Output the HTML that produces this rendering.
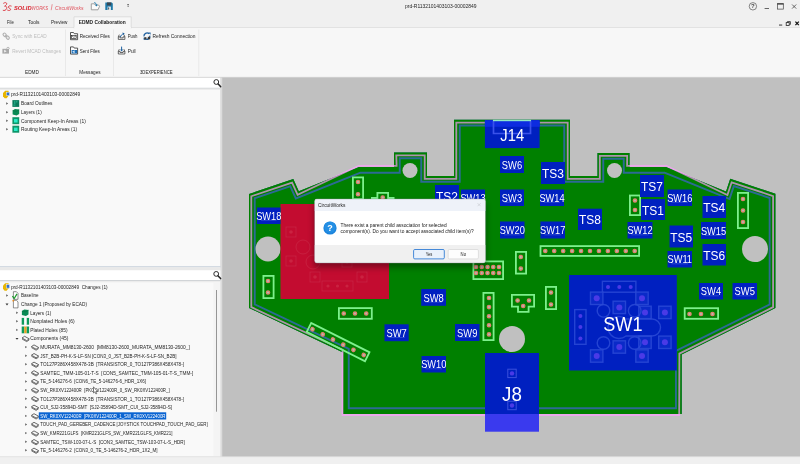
<!DOCTYPE html><html><head><meta charset="utf-8"><title>CircuitWorks</title>
<style>html,body{margin:0;padding:0;background:#f0f0f0;overflow:hidden}svg{display:block;will-change:transform}text{font-family:"Liberation Sans", Arial, sans-serif;}</style></head><body>
<svg width="800" height="464" viewBox="0 0 800 464">
<rect x="0" y="0" width="800" height="464" fill="#f0f0f0" />
<rect x="0" y="27.8" width="800" height="49.8" fill="#f7f7f7" />
<rect x="0" y="27.2" width="800" height="0.7" fill="#dcdcdc" />
<rect x="222.1" y="77.4" width="577.9" height="379.2" fill="#c0c0c0" />
<rect x="0" y="77.6" width="220.4" height="378.9" fill="#f9f9f9" />
<g fill="none" stroke="#d9232e" stroke-width="0.85" stroke-linecap="round" stroke-linejoin="round">
<path d="M3.6,3.2 C5.4,2 7.2,2.6 6.6,4.4 C6.2,5.4 5,5.8 4.6,6.2 C6.2,6 7.2,7 6.6,8.6 C6,10.4 4.2,10.8 3.2,10.4"/>
<path d="M11.2,6 C9.8,5.4 8.2,6 8.4,7.2 C8.6,8.4 10.6,8.2 10.6,9.4 C10.6,10.6 8.6,10.8 7.6,10.2"/>
</g>
<text x="14" y="9.7" font-size="5.6" fill="#d9232e" textLength="17.6" lengthAdjust="spacingAndGlyphs" font-weight="bold" font-style="italic" xml:space="preserve" >SOLID</text>
<text x="31.6" y="9.7" font-size="5.6" fill="#e0525c" textLength="16.6" lengthAdjust="spacingAndGlyphs" font-style="italic" xml:space="preserve" >WORKS</text>
<path d="M52.2,4.2 L51.2,10.2" stroke="#e0525c" stroke-width="0.6"/>
<text x="55" y="9.7" font-size="5.6" fill="#e0525c" textLength="28.6" lengthAdjust="spacingAndGlyphs" font-style="italic" xml:space="preserve" >CircuitWorks</text>
<path d="M91.3,3.8 H94.4 L95.2,5 H98.6 L99.6,6.2 L98,9.8 H91.3 Z" fill="#fbfbfb" stroke="#8a8a8a" stroke-width="0.8" stroke-linejoin="round"/>
<path d="M94.3,2.6 C95.6,2.8 96.4,3.8 96.5,5.6" fill="none" stroke="#1a7ab0" stroke-width="1"/><path d="M95.2,4.9 L96.6,6.6 L97.6,4.6 Z" fill="#1a7ab0"/>
<path d="M105.3,2.4 H111.8 L112.8,3.4 V10 H105.3 Z" fill="#1f79a8"/>
<rect x="107" y="2.4" width="4.2" height="3.0" fill="#3a4650" />
<rect x="107.6" y="6.6" width="3.2" height="3.4" fill="#f4f6f8" />
<rect x="108.2" y="7.4" width="1.0" height="2.2" fill="#3a4650" />
<path d="M127.1,5.7 h2 l-1,1.3 z" fill="#444"/><rect x="127.2" y="4.1" width="1.8" height="0.7" fill="#444"/>
<text x="405" y="8.2" font-size="5.5" fill="#1e1e1e" textLength="71.5" lengthAdjust="spacingAndGlyphs" xml:space="preserve" >prd-R1132101403103-00002849</text>
<circle cx="752.9" cy="6.3" r="3.7" fill="none" stroke="#555" stroke-width="0.7"/>
<text x="752.9" y="8.4" font-size="6" fill="#444" text-anchor="middle" font-weight="bold" xml:space="preserve" >?</text>
<rect x="764.6" y="8" width="4.4" height="0.8" fill="#444" />
<rect x="777.5" y="3.7" width="5.8" height="5.4" fill="none" stroke="#444" stroke-width="0.7"/>
<rect x="777.2" y="3.3" width="6.4" height="1.3" fill="#444" />
<path d="M792.1,4.5 L796.2,8.6 M796.2,4.5 L792.1,8.6" stroke="#444" stroke-width="0.8"/>
<rect x="779" y="24.6" width="3.2" height="0.9" fill="#222" />
<rect x="786.2" y="22.6" width="3" height="2.8" fill="none" stroke="#222" stroke-width="0.8"/><path d="M787.4,22.4 V21.6 H790.4 V24.4 H789.6" fill="none" stroke="#222" stroke-width="0.8"/>
<path d="M795.4,21.6 L798.8,25.2 M798.8,21.6 L795.4,25.2" stroke="#111" stroke-width="1.2"/>
<text x="7" y="24" font-size="5.7" fill="#1e1e1e" textLength="6.8" lengthAdjust="spacingAndGlyphs" xml:space="preserve" >File</text>
<text x="28" y="24" font-size="5.7" fill="#1e1e1e" textLength="11.4" lengthAdjust="spacingAndGlyphs" xml:space="preserve" >Tools</text>
<text x="51" y="24" font-size="5.7" fill="#1e1e1e" textLength="16.4" lengthAdjust="spacingAndGlyphs" xml:space="preserve" >Preview</text>
<path d="M74,28.2 V16.8 H131.2 V28.2" fill="#f7f7f7" stroke="#d4d4d4" stroke-width="0.7"/>
<rect x="74.4" y="27" width="56.5" height="1.4" fill="#f7f7f7" />
<text x="78.8" y="24" font-size="5.7" fill="#1a1a1a" textLength="47" lengthAdjust="spacingAndGlyphs" font-weight="bold" xml:space="preserve" >EDMD Collaboration</text>
<rect x="65.3" y="29.5" width="0.7" height="46.5" fill="#e3e3e3" />
<rect x="113.10000000000001" y="29.5" width="0.7" height="46.5" fill="#e3e3e3" />
<rect x="198.5" y="29.5" width="0.7" height="46.5" fill="#e3e3e3" />
<rect x="0" y="76.9" width="800" height="0.9" fill="#cdcdcd" />
<g fill="none" stroke="#b2b2b2" stroke-width="1.1" stroke-linecap="round"><rect x="3.4" y="33" width="2.6" height="3.6" rx="1.2" transform="rotate(-40 4.7 34.8)"/><rect x="6.4" y="35.8" width="2.6" height="3.6" rx="1.2" transform="rotate(-40 7.7 37.6)"/><path d="M5.4,35.6 L7,37"/></g>
<text x="12.2" y="38.3" font-size="5.6" fill="#bdbdbd" textLength="34.6" lengthAdjust="spacingAndGlyphs" xml:space="preserve" >Sync with ECAD</text>
<rect x="2.4" y="48.8" width="6.6" height="4.8" fill="#a9a9a9"/><path d="M4.2,49.8 V52.6 L6.6,51.2 Z" fill="#f4f4f4"/><path d="M6.6,48.6 C6.8,46.8 9.4,46.8 9.4,48.8" fill="none" stroke="#b0b0b0" stroke-width="0.9"/>
<text x="12.2" y="53.1" font-size="5.6" fill="#bdbdbd" textLength="48.8" lengthAdjust="spacingAndGlyphs" xml:space="preserve" >Revert MCAD Changes</text>
<text x="25" y="74.2" font-size="5.5" fill="#1e1e1e" textLength="13.9" lengthAdjust="spacingAndGlyphs" xml:space="preserve" >EDMD</text>
<path d="M70.5,32.5 H73.5 L74.3,33.7 H77.6 V39.7 H70.5 Z" fill="#fcfcfc" stroke="#2e2e2e" stroke-width="0.8" stroke-linejoin="round"/>
<rect x="71.6" y="35.6" width="4.6" height="3" fill="#fff" stroke="#2e2e2e" stroke-width="0.7"/><path d="M71.6,35.6 L73.9,37.4 L76.2,35.6" fill="none" stroke="#2e2e2e" stroke-width="0.6"/>
<text x="79.7" y="38.3" font-size="5.6" fill="#1e1e1e" textLength="30.2" lengthAdjust="spacingAndGlyphs" xml:space="preserve" >Received Files</text>
<path d="M70.5,46.9 H73.5 L74.3,48.1 H77.6 V54.1 H70.5 Z" fill="#fcfcfc" stroke="#2e2e2e" stroke-width="0.8" stroke-linejoin="round"/>
<rect x="71.6" y="50" width="5.6" height="3.4" fill="#1d6fb8"/><path d="M72.2,51.7 L74.6,50.2 V53.2 Z" fill="#cfe4f7"/>
<text x="79.7" y="53.1" font-size="5.6" fill="#1e1e1e" textLength="20" lengthAdjust="spacingAndGlyphs" xml:space="preserve" >Sent Files</text>
<text x="79.3" y="74.2" font-size="5.5" fill="#1e1e1e" textLength="21.3" lengthAdjust="spacingAndGlyphs" xml:space="preserve" >Messages</text>
<path d="M119.3,34.6 L118.3,36.8 V39.4 H124.9 V36.8 L123.9,34.6 M118.3,36.8 H120.1 V37.9 H123.1 V36.8 H124.9" fill="none" stroke="#2e2e2e" stroke-width="0.7" stroke-linejoin="round"/>
<path d="M120.4,37 C120.8,35.4 121.8,34.4 123.4,33.8" fill="none" stroke="#1d5f9e" stroke-width="1"/><path d="M122.4,32.6 L124.6,33.2 L123.4,35.2 Z" fill="#1d5f9e"/>
<text x="127.7" y="38.3" font-size="5.6" fill="#1e1e1e" textLength="9.8" lengthAdjust="spacingAndGlyphs" xml:space="preserve" >Push</text>
<path d="M119.3,49.2 L118.3,51.4 V54.0 H124.9 V51.4 L123.9,49.2 M118.3,51.4 H120.1 V52.5 H123.1 V51.4 H124.9" fill="none" stroke="#2e2e2e" stroke-width="0.7" stroke-linejoin="round"/>
<path d="M121.6,46.6 V50.4" fill="none" stroke="#1d5f9e" stroke-width="1"/><path d="M120.1,49.6 H123.1 L121.6,51.6 Z" fill="#1d5f9e"/>
<text x="127.7" y="53.1" font-size="5.6" fill="#1e1e1e" textLength="8" lengthAdjust="spacingAndGlyphs" xml:space="preserve" >Pull</text>
<g fill="none" stroke="#1d5f9e" stroke-width="1.3"><path d="M144,36.4 A3,3 0 0 1 149,33.8"/><path d="M149.8,35.6 A3,3 0 0 1 144.8,38.4"/></g><path d="M148.2,32.4 H150.6 V34.8 Z M146.2,39.8 H143.6 V37.4 Z" fill="#1d5f9e"/><rect x="144.2" y="37.2" width="2.2" height="2.2" fill="#3a3a3a"/><rect x="147.8" y="36.8" width="2.4" height="2.6" fill="#3a3a3a"/>
<text x="152.5" y="38.3" font-size="5.6" fill="#1e1e1e" textLength="42.9" lengthAdjust="spacingAndGlyphs" xml:space="preserve" >Refresh Connection</text>
<text x="140" y="74.2" font-size="5.5" fill="#1e1e1e" textLength="32.6" lengthAdjust="spacingAndGlyphs" xml:space="preserve" >3DEXPERIENCE</text>
<rect x="0" y="77.8" width="220.4" height="10.0" fill="#ffffff" />
<rect x="0" y="87.8" width="220.4" height="0.9" fill="#c9cdd1" />
<rect x="0" y="88.7" width="220.4" height="1.3" fill="#ececec" />
<rect x="220.2" y="77.8" width="1.9" height="378.7" fill="#dcdcdc" />
<circle cx="216.3" cy="82" r="2.4" fill="#fff" stroke="#222" stroke-width="0.95"/><path d="M218.20000000000002,84 L220.70000000000002,86.7" stroke="#222" stroke-width="1.5" stroke-linecap="round"/>
<rect x="0" y="266.4" width="220.4" height="0.9" fill="#b9c5d3" />
<rect x="0" y="267.3" width="220.4" height="3.1" fill="#e9e9e9" />
<rect x="0" y="270.4" width="220.4" height="9.6" fill="#ffffff" />
<rect x="0" y="280" width="220.4" height="0.9" fill="#c9cdd1" />
<rect x="0" y="280.9" width="220.4" height="1.4" fill="#ececec" />
<circle cx="216.2" cy="273.9" r="2.4" fill="#fff" stroke="#222" stroke-width="0.95"/><path d="M218.1,275.9 L220.6,278.59999999999997" stroke="#222" stroke-width="1.5" stroke-linecap="round"/>
<rect x="213.4" y="282.3" width="6.8" height="174.2" fill="#f4f4f4" />
<rect x="216" y="290" width="0.9" height="121.7" fill="#8c8c8c" />
<rect x="0" y="456.5" width="800" height="0.6" fill="#dadada" />
<path d="M5.2,90.80000000000001 H8.6 V95.80000000000001 L6.6,98.2 H4.6 L3,96.2 V93.0 Z" fill="#e8b600"/>
<rect x="6.4" y="92.2" width="3.2" height="3.4" fill="#2f6fd0" stroke="#e8f0ff" stroke-width="0.5"/>
<text x="10.9" y="96.25" font-size="5.7" fill="#1e1e1e" textLength="69.3" lengthAdjust="spacingAndGlyphs" xml:space="preserve" >prd-R1132101403103-00002849</text>
<path d="M6.4,102.3 L7.9,103.5 L6.4,104.7 Z" fill="#333"/>
<rect x="12.4" y="100.1" width="6.8" height="6.8" fill="#0c7a5c"/><path d="M14.8,100.9 V104.1 M16.8,100.9 V102.5 M13.4,105.1 H15.4" stroke="#35d0a8" stroke-width="0.7"/>
<text x="21" y="105.35" font-size="5.7" fill="#1e1e1e" textLength="31.5" lengthAdjust="spacingAndGlyphs" xml:space="preserve" >Board Outlines</text>
<path d="M6.4,111.0 L7.9,112.2 L6.4,113.4 Z" fill="#333"/>
<path d="M12.6,110.60000000000001 L15.0,109.0 L19.2,109.60000000000001 V114.0 L16.6,115.60000000000001 L12.6,114.60000000000001 Z" fill="#0a8a55"/><path d="M12.6,110.60000000000001 L16.6,111.3 L19.2,109.60000000000001" fill="none" stroke="#0a6a40" stroke-width="0.5"/>
<text x="21" y="114.05" font-size="5.7" fill="#1e1e1e" textLength="20.7" lengthAdjust="spacingAndGlyphs" xml:space="preserve" >Layers (1)</text>
<path d="M6.4,119.5 L7.9,120.7 L6.4,121.9 Z" fill="#333"/>
<rect x="12.4" y="117.2" width="6.8" height="7" fill="#0f9468"/><rect x="14.0" y="119.10000000000001" width="3.6" height="3.4" fill="#28ecc8"/>
<text x="21" y="122.55" font-size="5.7" fill="#1e1e1e" textLength="64.8" lengthAdjust="spacingAndGlyphs" xml:space="preserve" >Component Keep-In Areas (1)</text>
<path d="M6.4,127.99999999999999 L7.9,129.2 L6.4,130.39999999999998 Z" fill="#333"/>
<rect x="12.4" y="125.69999999999999" width="6.8" height="7" fill="#0f9468"/><rect x="14.0" y="127.6" width="3.6" height="3.4" fill="#28ecc8"/>
<text x="21" y="131.05" font-size="5.7" fill="#1e1e1e" textLength="56" lengthAdjust="spacingAndGlyphs" xml:space="preserve" >Routing Keep-In Areas (1)</text>
<path d="M5.2,283.29999999999995 H8.6 V288.29999999999995 L6.6,290.7 H4.6 L3,288.7 V285.5 Z" fill="#e8b600"/>
<rect x="6.4" y="284.7" width="3.2" height="3.4" fill="#2f6fd0" stroke="#e8f0ff" stroke-width="0.5"/>
<text x="10.9" y="288.75" font-size="5.7" fill="#1e1e1e" textLength="96.7" lengthAdjust="spacingAndGlyphs" xml:space="preserve" >prd-R1132101403103-00002849  Changes (1)</text>
<path d="M6.4,294.3 L7.9,295.5 L6.4,296.7 Z" fill="#333"/>
<path d="M13.4,291.7 H16.4 L18.0,293.3 V299.3 H13.4 Z" fill="#fff" stroke="#444" stroke-width="0.6"/>
<path d="M12.4,296.1 L14.200000000000001,298.5 L17.0,293.9" fill="none" stroke="#1a9a2a" stroke-width="1.2"/>
<text x="21" y="297.35" font-size="5.7" fill="#1e1e1e" textLength="17.5" lengthAdjust="spacingAndGlyphs" xml:space="preserve" >Baseline</text>
<path d="M5.5,303.5 H8.5 L7,305.40000000000003 Z" fill="#333"/>
<path d="M13.4,300.3 H16.4 L18.0,301.90000000000003 V307.90000000000003 H13.4 Z" fill="#fff" stroke="#444" stroke-width="0.6"/>
<circle cx="13.3" cy="300.70000000000005" r="0.9" fill="#e88a20"/>
<text x="21" y="305.95" font-size="5.7" fill="#1e1e1e" textLength="66" lengthAdjust="spacingAndGlyphs" xml:space="preserve" >Change 1 (Proposed by ECAD)</text>
<path d="M16.4,311.5 L17.9,312.7 L16.4,313.9 Z" fill="#333"/>
<path d="M21.9,311.09999999999997 L24.3,309.5 L28.5,310.09999999999997 V314.5 L25.9,316.09999999999997 L21.9,315.09999999999997 Z" fill="#0a8a55"/><path d="M21.9,311.09999999999997 L25.9,311.8 L28.5,310.09999999999997" fill="none" stroke="#0a6a40" stroke-width="0.5"/>
<text x="30.2" y="314.55" font-size="5.7" fill="#1e1e1e" textLength="21" lengthAdjust="spacingAndGlyphs" xml:space="preserve" >Layers (1)</text>
<path d="M16.4,320.1 L17.9,321.3 L16.4,322.5 Z" fill="#333"/>
<rect x="21.7" y="317.90000000000003" width="2.6" height="6.8" fill="#0c9a5a"/><rect x="26.5" y="317.90000000000003" width="2.6" height="6.8" fill="#0c9a5a"/><rect x="24.3" y="317.90000000000003" width="2.2" height="6.8" fill="#fafafa"/>
<text x="30.2" y="323.15" font-size="5.7" fill="#1e1e1e" textLength="44.5" lengthAdjust="spacingAndGlyphs" xml:space="preserve" >Nonplated Holes (6)</text>
<path d="M16.4,328.7 L17.9,329.9 L16.4,331.09999999999997 Z" fill="#333"/>
<rect x="21.7" y="326.5" width="2.6" height="6.8" fill="#0c9a5a"/><rect x="26.5" y="326.5" width="2.6" height="6.8" fill="#0c9a5a"/><rect x="24.3" y="326.5" width="2.2" height="6.8" fill="#e8a020"/>
<text x="30.2" y="331.75" font-size="5.7" fill="#1e1e1e" textLength="37.4" lengthAdjust="spacingAndGlyphs" xml:space="preserve" >Plated Holes (85)</text>
<path d="M15.5,337.9 H18.5 L17,339.8 Z" fill="#333"/>
<path d="M22.0,338.0 L24.599999999999998,336.3 L29.299999999999997,338.9 L26.7,340.6 Z" fill="#f6f6f6" stroke="#3a3a3a" stroke-width="0.75" stroke-linejoin="round"/><path d="M22.0,339.0 L26.7,341.6 L29.299999999999997,339.9" fill="none" stroke="#3a3a3a" stroke-width="0.7"/>
<text x="30.2" y="340.35" font-size="5.7" fill="#1e1e1e" textLength="38.2" lengthAdjust="spacingAndGlyphs" xml:space="preserve" >Components (45)</text>
<path d="M25.4,345.90000000000003 L26.9,347.1 L25.4,348.3 Z" fill="#333"/>
<path d="M31.400000000000002,346.6 L34.0,344.90000000000003 L38.7,347.5 L36.1,349.20000000000005 Z" fill="#f6f6f6" stroke="#3a3a3a" stroke-width="0.75" stroke-linejoin="round"/><path d="M31.400000000000002,347.6 L36.1,350.20000000000005 L38.7,348.5" fill="none" stroke="#3a3a3a" stroke-width="0.7"/>
<text x="40.25" y="348.95" font-size="5.7" fill="#1e1e1e" textLength="149.5" lengthAdjust="spacingAndGlyphs" xml:space="preserve" >MURATA_MM8130-2600  [MM8130-2600_MURATA_MM8130-2600_]</text>
<path d="M25.4,354.5 L26.9,355.7 L25.4,356.9 Z" fill="#333"/>
<path d="M31.400000000000002,355.2 L34.0,353.5 L38.7,356.09999999999997 L36.1,357.8 Z" fill="#f6f6f6" stroke="#3a3a3a" stroke-width="0.75" stroke-linejoin="round"/><path d="M31.400000000000002,356.2 L36.1,358.8 L38.7,357.09999999999997" fill="none" stroke="#3a3a3a" stroke-width="0.7"/>
<text x="40.25" y="357.55" font-size="5.7" fill="#1e1e1e" textLength="136.2" lengthAdjust="spacingAndGlyphs" xml:space="preserve" >JST_B2B-PH-K-S-LF-SN [CON3_0_JST_B2B-PH-K-S-LF-SN_B2B]</text>
<path d="M25.4,363.1 L26.9,364.3 L25.4,365.5 Z" fill="#333"/>
<path d="M31.400000000000002,363.8 L34.0,362.1 L38.7,364.7 L36.1,366.40000000000003 Z" fill="#f6f6f6" stroke="#3a3a3a" stroke-width="0.75" stroke-linejoin="round"/><path d="M31.400000000000002,364.8 L36.1,367.40000000000003 L38.7,365.7" fill="none" stroke="#3a3a3a" stroke-width="0.7"/>
<text x="40.25" y="366.15" font-size="5.7" fill="#1e1e1e" textLength="143.7" lengthAdjust="spacingAndGlyphs" xml:space="preserve" >TO127P386X458X478-3B  [TRANSISTOR_0_TO127P386X458X478-]</text>
<path d="M25.4,371.7 L26.9,372.9 L25.4,374.09999999999997 Z" fill="#333"/>
<path d="M31.400000000000002,372.4 L34.0,370.7 L38.7,373.29999999999995 L36.1,375.0 Z" fill="#f6f6f6" stroke="#3a3a3a" stroke-width="0.75" stroke-linejoin="round"/><path d="M31.400000000000002,373.4 L36.1,376.0 L38.7,374.29999999999995" fill="none" stroke="#3a3a3a" stroke-width="0.7"/>
<text x="40.25" y="374.75" font-size="5.7" fill="#1e1e1e" textLength="153" lengthAdjust="spacingAndGlyphs" xml:space="preserve" >SAMTEC_TMM-105-01-T-S  [CON5_SAMTEC_TMM-105-01-T-S_TMM-]</text>
<path d="M25.4,380.3 L26.9,381.5 L25.4,382.7 Z" fill="#333"/>
<path d="M31.400000000000002,381.0 L34.0,379.3 L38.7,381.9 L36.1,383.6 Z" fill="#f6f6f6" stroke="#3a3a3a" stroke-width="0.75" stroke-linejoin="round"/><path d="M31.400000000000002,382.0 L36.1,384.6 L38.7,382.9" fill="none" stroke="#3a3a3a" stroke-width="0.7"/>
<text x="40.25" y="383.35" font-size="5.7" fill="#1e1e1e" textLength="105.8" lengthAdjust="spacingAndGlyphs" xml:space="preserve" >TE_5-146276-6  [CON6_TE_5-146276-6_HDR_1X6]</text>
<path d="M25.4,388.90000000000003 L26.9,390.1 L25.4,391.3 Z" fill="#333"/>
<path d="M31.400000000000002,389.6 L34.0,387.90000000000003 L38.7,390.5 L36.1,392.20000000000005 Z" fill="#f6f6f6" stroke="#3a3a3a" stroke-width="0.75" stroke-linejoin="round"/><path d="M31.400000000000002,390.6 L36.1,393.20000000000005 L38.7,391.5" fill="none" stroke="#3a3a3a" stroke-width="0.7"/>
<text x="40.25" y="391.95" font-size="5.7" fill="#1e1e1e" textLength="129.4" lengthAdjust="spacingAndGlyphs" xml:space="preserve" >SW_RK0XV122400R  [PK0XV122400R_0_SW_RK0XV122400R_]</text>
<path d="M25.4,397.5 L26.9,398.7 L25.4,399.9 Z" fill="#333"/>
<path d="M31.400000000000002,398.2 L34.0,396.5 L38.7,399.09999999999997 L36.1,400.8 Z" fill="#f6f6f6" stroke="#3a3a3a" stroke-width="0.75" stroke-linejoin="round"/><path d="M31.400000000000002,399.2 L36.1,401.8 L38.7,400.09999999999997" fill="none" stroke="#3a3a3a" stroke-width="0.7"/>
<text x="40.25" y="400.55" font-size="5.7" fill="#1e1e1e" textLength="143.7" lengthAdjust="spacingAndGlyphs" xml:space="preserve" >TO127P386X458X478-3B  [TRANSISTOR_1_TO127P386X458X478-]</text>
<path d="M25.4,406.1 L26.9,407.3 L25.4,408.5 Z" fill="#333"/>
<path d="M31.400000000000002,406.8 L34.0,405.1 L38.7,407.7 L36.1,409.40000000000003 Z" fill="#f6f6f6" stroke="#3a3a3a" stroke-width="0.75" stroke-linejoin="round"/><path d="M31.400000000000002,407.8 L36.1,410.40000000000003 L38.7,408.7" fill="none" stroke="#3a3a3a" stroke-width="0.7"/>
<text x="40.25" y="409.15" font-size="5.7" fill="#1e1e1e" textLength="131.8" lengthAdjust="spacingAndGlyphs" xml:space="preserve" >CUI_SJ2-35894D-SMT  [SJ2-35894D-SMT_CUI_SJ2-35894D-S]</text>
<path d="M25.4,414.7 L26.9,415.9 L25.4,417.09999999999997 Z" fill="#333"/>
<path d="M31.400000000000002,415.4 L34.0,413.7 L38.7,416.29999999999995 L36.1,418.0 Z" fill="#f6f6f6" stroke="#3a3a3a" stroke-width="0.75" stroke-linejoin="round"/><path d="M31.400000000000002,416.4 L36.1,419.0 L38.7,417.29999999999995" fill="none" stroke="#3a3a3a" stroke-width="0.7"/>
<rect x="38.8" y="412.3" width="127.4" height="7.2" fill="#0a64d2" />
<text x="40.25" y="417.75" font-size="5.7" fill="#fff" textLength="125.2" lengthAdjust="spacingAndGlyphs" xml:space="preserve" >SW_RK0XV122400R  [PK0XV122400R_1_SW_RK0XV122400R</text>
<path d="M25.4,423.3 L26.9,424.5 L25.4,425.7 Z" fill="#333"/>
<path d="M31.400000000000002,424.0 L34.0,422.3 L38.7,424.9 L36.1,426.6 Z" fill="#f6f6f6" stroke="#3a3a3a" stroke-width="0.75" stroke-linejoin="round"/><path d="M31.400000000000002,425.0 L36.1,427.6 L38.7,425.9" fill="none" stroke="#3a3a3a" stroke-width="0.7"/>
<text x="40.25" y="426.35" font-size="5.7" fill="#1e1e1e" textLength="167.4" lengthAdjust="spacingAndGlyphs" xml:space="preserve" >TOUCH_PAD_GEREBER_CADENCE [JOYSTICK TOUCHPAD_TOUCH_PAD_GER]</text>
<path d="M25.4,431.90000000000003 L26.9,433.1 L25.4,434.3 Z" fill="#333"/>
<path d="M31.400000000000002,432.6 L34.0,430.90000000000003 L38.7,433.5 L36.1,435.20000000000005 Z" fill="#f6f6f6" stroke="#3a3a3a" stroke-width="0.75" stroke-linejoin="round"/><path d="M31.400000000000002,433.6 L36.1,436.20000000000005 L38.7,434.5" fill="none" stroke="#3a3a3a" stroke-width="0.7"/>
<text x="40.25" y="434.95" font-size="5.7" fill="#1e1e1e" textLength="132.2" lengthAdjust="spacingAndGlyphs" xml:space="preserve" >SW_KMR221GLFS  [KMR221GLFS_SW_KMR221GLFS_KMR221]</text>
<path d="M25.4,440.5 L26.9,441.7 L25.4,442.9 Z" fill="#333"/>
<path d="M31.400000000000002,441.2 L34.0,439.5 L38.7,442.09999999999997 L36.1,443.8 Z" fill="#f6f6f6" stroke="#3a3a3a" stroke-width="0.75" stroke-linejoin="round"/><path d="M31.400000000000002,442.2 L36.1,444.8 L38.7,443.09999999999997" fill="none" stroke="#3a3a3a" stroke-width="0.7"/>
<text x="40.25" y="443.55" font-size="5.7" fill="#1e1e1e" textLength="144.6" lengthAdjust="spacingAndGlyphs" xml:space="preserve" >SAMTEC_TSW-103-07-L-S  [CON3_SAMTEC_TSW-103-07-L-S_HDR]</text>
<path d="M25.4,449.1 L26.9,450.3 L25.4,451.5 Z" fill="#333"/>
<path d="M31.400000000000002,449.8 L34.0,448.1 L38.7,450.7 L36.1,452.40000000000003 Z" fill="#f6f6f6" stroke="#3a3a3a" stroke-width="0.75" stroke-linejoin="round"/><path d="M31.400000000000002,450.8 L36.1,453.40000000000003 L38.7,451.7" fill="none" stroke="#3a3a3a" stroke-width="0.7"/>
<text x="40.25" y="452.15" font-size="5.7" fill="#1e1e1e" textLength="117.3" lengthAdjust="spacingAndGlyphs" xml:space="preserve" >TE_5-146276-2  [CON3_0_TE_5-146276-2_HDR_1X2_M]</text>
<path d="M93.5,386.8 V393 L94.9,391.8 L95.9,394 L96.8,393.6 L95.8,391.5 H97.6 Z" fill="#fff" stroke="#111" stroke-width="0.5" stroke-linejoin="round"/>
<defs><clipPath id="bc"><polygon points="249,194 293.3,179.1 298.8,191.2 359,167 394,167 394,152.5 427,152.5 427,176 454,176 454,119.75 570,119.75 570,176 597.5,176 597.5,153 629.5,153 629.5,167 666,167 726,191.4 730.2,178.8 775.4,193.8 775.4,308 681.7,354.4 681.7,414 343,414 343,352.5 249,308"/></clipPath></defs>
<g clip-path="url(#bc)"><polygon points="249,194 293.3,179.1 298.8,191.2 359,167 394,167 394,152.5 427,152.5 427,176 454,176 454,119.75 570,119.75 570,176 597.5,176 597.5,153 629.5,153 629.5,167 666,167 726,191.4 730.2,178.8 775.4,193.8 775.4,308 681.7,354.4 681.7,414 343,414 343,352.5 249,308" fill="#008000"/>
<polygon points="249,194 293.3,179.1 298.8,191.2 359,167 394,167 394,152.5 427,152.5 427,176 454,176 454,119.75 570,119.75 570,176 597.5,176 597.5,153 629.5,153 629.5,167 666,167 726,191.4 730.2,178.8 775.4,193.8 775.4,308 681.7,354.4 681.7,414 343,414 343,352.5 249,308" fill="none" stroke="#2c6a94" stroke-width="13.4" stroke-linejoin="miter"/>
<polygon points="249,194 293.3,179.1 298.8,191.2 359,167 394,167 394,152.5 427,152.5 427,176 454,176 454,119.75 570,119.75 570,176 597.5,176 597.5,153 629.5,153 629.5,167 666,167 726,191.4 730.2,178.8 775.4,193.8 775.4,308 681.7,354.4 681.7,414 343,414 343,352.5 249,308" fill="none" stroke="#008000" stroke-width="9.6" stroke-linejoin="miter"/></g>
<polygon points="251.3,196.25 292.07,182.54 297.62,194.75 358.6,165.8 396.6,165.8 396.3,155.4 424.7,155.4 424.7,178.9 456.3,178.9 456.3,122.65 567.7,122.65 567.7,178.9 599.8,178.9 599.8,155.9 627.2,155.9 627.1,165.8 666.4,165.8 727.41,195.05 731.66,182.31 773.1,196.06 773.1,307.17 679.4,353.57 679.2,415 342.5,415 342.6,349.8 251.3,307.14" fill="none" stroke="#ff9cff" stroke-opacity="0.68" stroke-width="1.8" stroke-linejoin="miter"/>
<circle cx="410" cy="170.5" r="7.5" fill="#c0c0c0"/>
<circle cx="614.5" cy="170.5" r="7.5" fill="#c0c0c0"/>
<circle cx="268" cy="249" r="12.5" fill="#c0c0c0"/>
<circle cx="755" cy="249" r="13" fill="#c0c0c0"/>
<circle cx="512" cy="339" r="13" fill="#c0c0c0"/>
<rect x="352.9" y="177.4" width="10.2" height="21.7" fill="none" stroke="#7df08c" stroke-width="1.8"/>
<circle cx="358" cy="182" r="1.7" fill="#b4b8b6" stroke="#e0826c" stroke-width="1.25"/>
<circle cx="358" cy="194.25" r="1.7" fill="#b4b8b6" stroke="#e0826c" stroke-width="1.25"/>
<path d="M377.4,198 V192.9 H388.1 V198 H393.6 V210 H371.9 V198 Z" fill="none" stroke="#7df08c" stroke-width="1.8"/>
<circle cx="382.7" cy="197.5" r="1.7" fill="#b4b8b6" stroke="#e0826c" stroke-width="1.25"/>
<rect x="629.9" y="195.5" width="10.2" height="19.6" fill="none" stroke="#7df08c" stroke-width="1.8"/>
<circle cx="635" cy="200.5" r="1.7" fill="#b4b8b6" stroke="#e0826c" stroke-width="1.25"/>
<circle cx="635" cy="210" r="1.7" fill="#b4b8b6" stroke="#e0826c" stroke-width="1.25"/>
<rect x="737.9" y="192.9" width="10.2" height="35.2" fill="none" stroke="#7df08c" stroke-width="1.8"/>
<circle cx="743" cy="199" r="1.7" fill="#b4b8b6" stroke="#e0826c" stroke-width="1.25"/>
<circle cx="743" cy="210.5" r="1.7" fill="#b4b8b6" stroke="#e0826c" stroke-width="1.25"/>
<circle cx="743" cy="222" r="1.7" fill="#b4b8b6" stroke="#e0826c" stroke-width="1.25"/>
<rect x="540.5" y="246.1" width="98.6" height="9.8" fill="none" stroke="#7df08c" stroke-width="1.8"/>
<circle cx="545.3" cy="251" r="1.7" fill="#b4b8b6" stroke="#e0826c" stroke-width="1.25"/>
<circle cx="554.24" cy="251" r="1.7" fill="#b4b8b6" stroke="#e0826c" stroke-width="1.25"/>
<circle cx="563.18" cy="251" r="1.7" fill="#b4b8b6" stroke="#e0826c" stroke-width="1.25"/>
<circle cx="572.12" cy="251" r="1.7" fill="#b4b8b6" stroke="#e0826c" stroke-width="1.25"/>
<circle cx="581.06" cy="251" r="1.7" fill="#b4b8b6" stroke="#e0826c" stroke-width="1.25"/>
<circle cx="590.0" cy="251" r="1.7" fill="#b4b8b6" stroke="#e0826c" stroke-width="1.25"/>
<circle cx="598.9399999999999" cy="251" r="1.7" fill="#b4b8b6" stroke="#e0826c" stroke-width="1.25"/>
<circle cx="607.88" cy="251" r="1.7" fill="#b4b8b6" stroke="#e0826c" stroke-width="1.25"/>
<circle cx="616.8199999999999" cy="251" r="1.7" fill="#b4b8b6" stroke="#e0826c" stroke-width="1.25"/>
<circle cx="625.76" cy="251" r="1.7" fill="#b4b8b6" stroke="#e0826c" stroke-width="1.25"/>
<circle cx="634.6999999999999" cy="251" r="1.7" fill="#b4b8b6" stroke="#e0826c" stroke-width="1.25"/>
<rect x="515.9" y="251.9" width="10.2" height="21.7" fill="none" stroke="#7df08c" stroke-width="1.8"/>
<circle cx="520.8" cy="257" r="1.7" fill="#b4b8b6" stroke="#e0826c" stroke-width="1.25"/>
<circle cx="520.8" cy="268.6" r="1.7" fill="#b4b8b6" stroke="#e0826c" stroke-width="1.25"/>
<rect x="473.4" y="261.4" width="29.7" height="17.7" fill="none" stroke="#7df08c" stroke-width="1.8"/>
<circle cx="476.0" cy="267" r="1.7" fill="#b4b8b6" stroke="#e0826c" stroke-width="1.25"/>
<circle cx="481.75" cy="267" r="1.7" fill="#b4b8b6" stroke="#e0826c" stroke-width="1.25"/>
<circle cx="487.5" cy="267" r="1.7" fill="#b4b8b6" stroke="#e0826c" stroke-width="1.25"/>
<circle cx="493.25" cy="267" r="1.7" fill="#b4b8b6" stroke="#e0826c" stroke-width="1.25"/>
<circle cx="499.0" cy="267" r="1.7" fill="#b4b8b6" stroke="#e0826c" stroke-width="1.25"/>
<circle cx="476.0" cy="273" r="1.7" fill="#b4b8b6" stroke="#e0826c" stroke-width="1.25"/>
<circle cx="481.75" cy="273" r="1.7" fill="#b4b8b6" stroke="#e0826c" stroke-width="1.25"/>
<circle cx="487.5" cy="273" r="1.7" fill="#b4b8b6" stroke="#e0826c" stroke-width="1.25"/>
<circle cx="493.25" cy="273" r="1.7" fill="#b4b8b6" stroke="#e0826c" stroke-width="1.25"/>
<circle cx="499.0" cy="273" r="1.7" fill="#b4b8b6" stroke="#e0826c" stroke-width="1.25"/>
<rect x="483.4" y="292.9" width="10.2" height="47.2" fill="none" stroke="#7df08c" stroke-width="1.8"/>
<circle cx="489" cy="298.0" r="1.7" fill="#b4b8b6" stroke="#e0826c" stroke-width="1.25"/>
<circle cx="489" cy="307.1" r="1.7" fill="#b4b8b6" stroke="#e0826c" stroke-width="1.25"/>
<circle cx="489" cy="316.2" r="1.7" fill="#b4b8b6" stroke="#e0826c" stroke-width="1.25"/>
<circle cx="489" cy="325.3" r="1.7" fill="#b4b8b6" stroke="#e0826c" stroke-width="1.25"/>
<circle cx="489" cy="334.4" r="1.7" fill="#b4b8b6" stroke="#e0826c" stroke-width="1.25"/>
<rect x="545.9" y="286.9" width="10.2" height="22.2" fill="none" stroke="#7df08c" stroke-width="1.8"/>
<circle cx="551" cy="292.5" r="1.7" fill="#b4b8b6" stroke="#e0826c" stroke-width="1.25"/>
<circle cx="551" cy="304.5" r="1.7" fill="#b4b8b6" stroke="#e0826c" stroke-width="1.25"/>
<rect x="684.6999999999999" y="308.2" width="33.4" height="10.6" fill="none" stroke="#7df08c" stroke-width="1.8"/>
<circle cx="689.5" cy="314" r="1.7" fill="#b4b8b6" stroke="#e0826c" stroke-width="1.25"/>
<circle cx="701" cy="314" r="1.7" fill="#b4b8b6" stroke="#e0826c" stroke-width="1.25"/>
<circle cx="712.5" cy="314" r="1.7" fill="#b4b8b6" stroke="#e0826c" stroke-width="1.25"/>
<rect x="263.4" y="275.9" width="10.2" height="22.2" fill="none" stroke="#7df08c" stroke-width="1.8"/>
<circle cx="268" cy="281" r="1.7" fill="#b4b8b6" stroke="#e0826c" stroke-width="1.25"/>
<circle cx="268" cy="292.5" r="1.7" fill="#b4b8b6" stroke="#e0826c" stroke-width="1.25"/>
<rect x="338.9" y="308.09999999999997" width="32.9" height="10.7" fill="none" stroke="#7df08c" stroke-width="1.8"/>
<circle cx="343.75" cy="313.5" r="1.7" fill="#b4b8b6" stroke="#e0826c" stroke-width="1.25"/>
<circle cx="355" cy="313.5" r="1.7" fill="#b4b8b6" stroke="#e0826c" stroke-width="1.25"/>
<circle cx="366.25" cy="313.5" r="1.7" fill="#b4b8b6" stroke="#e0826c" stroke-width="1.25"/>
<path d="M511.9,294.9 H534.1 V306.6 H528.6 V311.8 H518 V306.6 H511.9 Z" fill="none" stroke="#7df08c" stroke-width="1.8"/>
<circle cx="517.6" cy="300.5" r="1.7" fill="#b4b8b6" stroke="#e0826c" stroke-width="1.25"/>
<circle cx="529" cy="300.5" r="1.7" fill="#b4b8b6" stroke="#e0826c" stroke-width="1.25"/>
<circle cx="523.2" cy="306" r="1.7" fill="#b4b8b6" stroke="#e0826c" stroke-width="1.25"/>
<g transform="translate(338.1,342.1) rotate(26.68)">
<rect x="-32.6" y="-5" width="65.2" height="10" fill="none" stroke="#7df08c" stroke-width="1.8"/>
<circle cx="-28.68" cy="0" r="1.7" fill="#b4b8b6" stroke="#e0826c" stroke-width="1.25"/>
<circle cx="-17.21" cy="0" r="1.7" fill="#b4b8b6" stroke="#e0826c" stroke-width="1.25"/>
<circle cx="-5.74" cy="0" r="1.7" fill="#b4b8b6" stroke="#e0826c" stroke-width="1.25"/>
<circle cx="5.74" cy="0" r="1.7" fill="#b4b8b6" stroke="#e0826c" stroke-width="1.25"/>
<circle cx="17.21" cy="0" r="1.7" fill="#b4b8b6" stroke="#e0826c" stroke-width="1.25"/>
<circle cx="28.68" cy="0" r="1.7" fill="#b4b8b6" stroke="#e0826c" stroke-width="1.25"/>
</g>
<rect x="280.5" y="204" width="108.5" height="95" fill="#c30c30" />
<rect x="286" y="227" width="10" height="10" stroke="#d0405a" stroke-width="0.8" fill="none" opacity="0.45"/>
<circle cx="291" cy="232" r="1.8" fill="#d23a52" opacity="0.5"/>
<rect x="286" y="256" width="10" height="10" stroke="#d0405a" stroke-width="0.8" fill="none" opacity="0.45"/>
<circle cx="291" cy="261" r="1.8" fill="#d23a52" opacity="0.5"/>
<rect x="310" y="272" width="10" height="10" stroke="#d0405a" stroke-width="0.8" fill="none" opacity="0.45"/>
<circle cx="315" cy="277" r="1.8" fill="#d23a52" opacity="0.5"/>
<rect x="357" y="272" width="10" height="10" stroke="#d0405a" stroke-width="0.8" fill="none" opacity="0.45"/>
<circle cx="362" cy="277" r="1.8" fill="#d23a52" opacity="0.5"/>
<rect x="342" y="257" width="10" height="10" stroke="#d0405a" stroke-width="0.8" fill="none" opacity="0.45"/>
<circle cx="347" cy="262" r="1.8" fill="#d23a52" opacity="0.5"/>
<circle cx="303" cy="247" r="7" stroke="#d0405a" stroke-width="0.8" fill="none" opacity="0.45"/><circle cx="313" cy="262" r="7" stroke="#d0405a" stroke-width="0.8" fill="none" opacity="0.45"/>
<rect x="322" y="281" width="31" height="10" stroke="#d0405a" stroke-width="0.8" fill="none" opacity="0.45"/>
<circle cx="328" cy="286" r="1.6" fill="#d23a52" opacity="0.5"/>
<circle cx="337.5" cy="286" r="1.6" fill="#d23a52" opacity="0.5"/>
<circle cx="347" cy="286" r="1.6" fill="#d23a52" opacity="0.5"/>
<rect x="485" y="414" width="54" height="17.7" fill="#3a3aee" />
<rect x="484.9" y="120.2" width="54.7" height="27.9" fill="#0020c0" />
<rect x="500" y="156" width="24" height="17" fill="#0020c0" />
<rect x="541" y="162" width="24" height="22" fill="#0020c0" />
<rect x="435" y="185" width="24" height="22" fill="#0020c0" />
<rect x="461" y="189.5" width="24" height="16.5" fill="#0020c0" />
<rect x="500" y="189.5" width="24" height="16.5" fill="#0020c0" />
<rect x="540" y="189.5" width="24" height="16.5" fill="#0020c0" />
<rect x="257" y="207.5" width="23.5" height="16.5" fill="#0020c0" />
<rect x="640" y="175" width="24" height="22" fill="#0020c0" />
<rect x="641" y="199.1" width="24" height="20.9" fill="#0020c0" />
<rect x="667.5" y="189.5" width="24.5" height="16.5" fill="#0020c0" />
<rect x="702.5" y="196" width="23.5" height="22" fill="#0020c0" />
<rect x="627.5" y="222" width="25.0" height="16.5" fill="#0020c0" />
<rect x="669.5" y="225.5" width="23.5" height="22.0" fill="#0020c0" />
<rect x="701" y="222" width="25" height="17" fill="#0020c0" />
<rect x="667.5" y="251" width="24.5" height="16.5" fill="#0020c0" />
<rect x="702.5" y="244" width="23.5" height="21.5" fill="#0020c0" />
<rect x="578" y="208.7" width="24" height="21.3" fill="#0020c0" />
<rect x="500" y="221.5" width="24.5" height="17.0" fill="#0020c0" />
<rect x="540.4" y="221.5" width="24.6" height="17.0" fill="#0020c0" />
<rect x="699" y="283" width="24" height="16.5" fill="#0020c0" />
<rect x="732.5" y="283" width="24.5" height="16.5" fill="#0020c0" />
<rect x="421.2" y="289" width="24.8" height="16.8" fill="#0020c0" />
<rect x="384.5" y="324.3" width="24.2" height="16.9" fill="#0020c0" />
<rect x="455" y="324" width="24.5" height="17" fill="#0020c0" />
<rect x="421.5" y="356" width="24.5" height="16.5" fill="#0020c0" />
<rect x="569" y="275" width="107.8" height="95.5" fill="#0020c0" />
<rect x="485" y="353" width="54" height="61" fill="#0020c0" />
<rect x="602.4" y="281.3" width="33.5" height="10.9" stroke="#2a4ad6" stroke-width="1.4" fill="none" opacity="0.85"/>
<circle cx="608" cy="287" r="2" fill="#4a3ae6"/>
<circle cx="619.3" cy="287" r="2" fill="#4a3ae6"/>
<circle cx="630.7" cy="287" r="2" fill="#4a3ae6"/>
<rect x="574.7" y="309.6" width="11.3" height="34.7" stroke="#2a4ad6" stroke-width="1.4" fill="none" opacity="0.85"/>
<circle cx="580.4" cy="316" r="2" fill="#4a3ae6"/>
<circle cx="580.4" cy="327" r="2" fill="#4a3ae6"/>
<circle cx="580.4" cy="338.4" r="2" fill="#4a3ae6"/>
<rect x="590.5" y="292.1" width="12.4" height="12.4" fill="#0a2ac8"/><rect x="590.5" y="292.1" width="12.4" height="12.4" stroke="#2a4ad6" stroke-width="1.4" fill="none" opacity="0.85"/>
<circle cx="596.7" cy="298.3" r="3" fill="#4a3ae6"/>
<rect x="635.8" y="292.1" width="12.4" height="12.4" fill="#0a2ac8"/><rect x="635.8" y="292.1" width="12.4" height="12.4" stroke="#2a4ad6" stroke-width="1.4" fill="none" opacity="0.85"/>
<circle cx="642" cy="298.3" r="3" fill="#4a3ae6"/>
<rect x="613.1" y="301.2" width="12.4" height="12.4" fill="#0a2ac8"/><rect x="613.1" y="301.2" width="12.4" height="12.4" stroke="#2a4ad6" stroke-width="1.4" fill="none" opacity="0.85"/>
<circle cx="619.3" cy="307.4" r="3" fill="#4a3ae6"/>
<rect x="638.8" y="306.2" width="12.4" height="12.4" fill="#0a2ac8"/><rect x="638.8" y="306.2" width="12.4" height="12.4" stroke="#2a4ad6" stroke-width="1.4" fill="none" opacity="0.85"/>
<circle cx="645" cy="312.4" r="3" fill="#4a3ae6"/>
<rect x="658.7" y="306.2" width="12.4" height="12.4" fill="#0a2ac8"/><rect x="658.7" y="306.2" width="12.4" height="12.4" stroke="#2a4ad6" stroke-width="1.4" fill="none" opacity="0.85"/>
<circle cx="664.9" cy="312.4" r="3" fill="#4a3ae6"/>
<rect x="638.8" y="336.1" width="12.4" height="12.4" fill="#0a2ac8"/><rect x="638.8" y="336.1" width="12.4" height="12.4" stroke="#2a4ad6" stroke-width="1.4" fill="none" opacity="0.85"/>
<circle cx="645" cy="342.3" r="3" fill="#4a3ae6"/>
<rect x="658.7" y="336.1" width="12.4" height="12.4" fill="#0a2ac8"/><rect x="658.7" y="336.1" width="12.4" height="12.4" stroke="#2a4ad6" stroke-width="1.4" fill="none" opacity="0.85"/>
<circle cx="664.9" cy="342.3" r="3" fill="#4a3ae6"/>
<rect x="613.1" y="340.8" width="12.4" height="12.4" fill="#0a2ac8"/><rect x="613.1" y="340.8" width="12.4" height="12.4" stroke="#2a4ad6" stroke-width="1.4" fill="none" opacity="0.85"/>
<circle cx="619.3" cy="347" r="3" fill="#4a3ae6"/>
<rect x="590.5" y="349.8" width="12.4" height="12.4" fill="#0a2ac8"/><rect x="590.5" y="349.8" width="12.4" height="12.4" stroke="#2a4ad6" stroke-width="1.4" fill="none" opacity="0.85"/>
<circle cx="596.7" cy="356" r="3" fill="#4a3ae6"/>
<rect x="635.8" y="349.8" width="12.4" height="12.4" fill="#0a2ac8"/><rect x="635.8" y="349.8" width="12.4" height="12.4" stroke="#2a4ad6" stroke-width="1.4" fill="none" opacity="0.85"/>
<circle cx="642" cy="356" r="3" fill="#4a3ae6"/>
<circle cx="603.5" cy="310.8" r="6.3" stroke="#2a4ad6" stroke-width="1.4" fill="none" opacity="0.85"/>
<circle cx="634.7" cy="310.8" r="6.3" stroke="#2a4ad6" stroke-width="1.4" fill="none" opacity="0.85"/>
<circle cx="603.5" cy="343" r="6.3" stroke="#2a4ad6" stroke-width="1.4" fill="none" opacity="0.85"/>
<circle cx="634.7" cy="343" r="6.3" stroke="#2a4ad6" stroke-width="1.4" fill="none" opacity="0.85"/>
<path d="M626,319 H652 A8,8 0 0 1 652,336 H626 A11,11 0 1 1 626,319 Z" stroke="#2a4ad6" stroke-width="1.4" fill="none" opacity="0.85"/>
<rect x="484.9" y="120.2" width="54.7" height="6.6" fill="#0d2ce0" />
<path d="M493.5,120.5 V133.5 H530.5 V120.5" stroke="#3a52ea" stroke-width="1.7" fill="none"/>
<rect x="493" y="119.8" width="38" height="1.4" fill="#8de8c8" />
<rect x="507.8" y="369.2" width="8.4" height="8.4" stroke="#3a50dc" stroke-width="1" fill="none"/><circle cx="512" cy="373.4" r="2.2" fill="#4a3ae6"/>
<rect x="507.8" y="401.3" width="8.4" height="8.4" stroke="#3a50dc" stroke-width="1" fill="none"/><circle cx="512" cy="405.5" r="2.2" fill="#4a3ae6"/>
<rect x="504" y="168.8" width="16" height="1" fill="#3a55d8" opacity="0.7"/>
<rect x="465" y="201.8" width="16" height="1" fill="#3a55d8" opacity="0.7"/>
<rect x="504" y="201.8" width="16" height="1" fill="#3a55d8" opacity="0.7"/>
<rect x="544" y="201.8" width="16" height="1" fill="#3a55d8" opacity="0.7"/>
<rect x="261" y="219.8" width="15.5" height="1" fill="#3a55d8" opacity="0.7"/>
<rect x="671.5" y="201.8" width="16.5" height="1" fill="#3a55d8" opacity="0.7"/>
<rect x="631.5" y="234.3" width="17.0" height="1" fill="#3a55d8" opacity="0.7"/>
<rect x="705" y="234.8" width="17" height="1" fill="#3a55d8" opacity="0.7"/>
<rect x="671.5" y="263.3" width="16.5" height="1" fill="#3a55d8" opacity="0.7"/>
<rect x="504" y="234.3" width="16.5" height="1" fill="#3a55d8" opacity="0.7"/>
<rect x="544.4" y="234.3" width="16.6" height="1" fill="#3a55d8" opacity="0.7"/>
<rect x="703" y="295.3" width="16" height="1" fill="#3a55d8" opacity="0.7"/>
<rect x="736.5" y="295.3" width="16.5" height="1" fill="#3a55d8" opacity="0.7"/>
<rect x="425.2" y="301.6" width="16.8" height="1" fill="#3a55d8" opacity="0.7"/>
<rect x="388.5" y="337.0" width="16.2" height="1" fill="#3a55d8" opacity="0.7"/>
<rect x="459" y="336.8" width="16.5" height="1" fill="#3a55d8" opacity="0.7"/>
<rect x="425.5" y="368.3" width="16.5" height="1" fill="#3a55d8" opacity="0.7"/>
<text x="512.25" y="140.68" font-size="15.6" fill="#fff" textLength="23.8" lengthAdjust="spacingAndGlyphs" text-anchor="middle" xml:space="preserve" >J14</text>
<text x="512.0" y="168.69" font-size="10.3" fill="#fff" textLength="20.3" lengthAdjust="spacingAndGlyphs" text-anchor="middle" xml:space="preserve" >SW6</text>
<text x="553.0" y="178.08" font-size="12.8" fill="#fff" textLength="21.9" lengthAdjust="spacingAndGlyphs" text-anchor="middle" xml:space="preserve" >TS3</text>
<text x="447.0" y="201.08" font-size="12.8" fill="#fff" textLength="21.9" lengthAdjust="spacingAndGlyphs" text-anchor="middle" xml:space="preserve" >TS2</text>
<text x="473.0" y="201.94" font-size="10.3" fill="#fff" textLength="25.2" lengthAdjust="spacingAndGlyphs" text-anchor="middle" xml:space="preserve" >SW13</text>
<text x="512.0" y="201.94" font-size="10.3" fill="#fff" textLength="20.3" lengthAdjust="spacingAndGlyphs" text-anchor="middle" xml:space="preserve" >SW3</text>
<text x="552.0" y="201.94" font-size="10.3" fill="#fff" textLength="25.2" lengthAdjust="spacingAndGlyphs" text-anchor="middle" xml:space="preserve" >SW14</text>
<text x="268.75" y="219.94" font-size="10.3" fill="#fff" textLength="25.2" lengthAdjust="spacingAndGlyphs" text-anchor="middle" xml:space="preserve" >SW18</text>
<text x="652.0" y="191.08" font-size="12.8" fill="#fff" textLength="21.9" lengthAdjust="spacingAndGlyphs" text-anchor="middle" xml:space="preserve" >TS7</text>
<text x="653.0" y="214.63" font-size="12.8" fill="#fff" textLength="21.9" lengthAdjust="spacingAndGlyphs" text-anchor="middle" xml:space="preserve" >TS1</text>
<text x="679.75" y="201.94" font-size="10.3" fill="#fff" textLength="25.2" lengthAdjust="spacingAndGlyphs" text-anchor="middle" xml:space="preserve" >SW16</text>
<text x="714.25" y="212.08" font-size="12.8" fill="#fff" textLength="21.9" lengthAdjust="spacingAndGlyphs" text-anchor="middle" xml:space="preserve" >TS4</text>
<text x="640.0" y="234.44" font-size="10.3" fill="#fff" textLength="25.2" lengthAdjust="spacingAndGlyphs" text-anchor="middle" xml:space="preserve" >SW12</text>
<text x="681.25" y="241.58" font-size="12.8" fill="#fff" textLength="21.9" lengthAdjust="spacingAndGlyphs" text-anchor="middle" xml:space="preserve" >TS5</text>
<text x="713.5" y="234.69" font-size="10.3" fill="#fff" textLength="25.2" lengthAdjust="spacingAndGlyphs" text-anchor="middle" xml:space="preserve" >SW15</text>
<text x="679.75" y="263.44" font-size="10.3" fill="#fff" textLength="24.5" lengthAdjust="spacingAndGlyphs" text-anchor="middle" xml:space="preserve" >SW11</text>
<text x="714.25" y="259.83" font-size="12.8" fill="#fff" textLength="21.9" lengthAdjust="spacingAndGlyphs" text-anchor="middle" xml:space="preserve" >TS6</text>
<text x="590.0" y="224.43" font-size="12.8" fill="#fff" textLength="21.9" lengthAdjust="spacingAndGlyphs" text-anchor="middle" xml:space="preserve" >TS8</text>
<text x="512.25" y="234.19" font-size="10.3" fill="#fff" textLength="25.2" lengthAdjust="spacingAndGlyphs" text-anchor="middle" xml:space="preserve" >SW20</text>
<text x="552.7" y="234.19" font-size="10.3" fill="#fff" textLength="25.2" lengthAdjust="spacingAndGlyphs" text-anchor="middle" xml:space="preserve" >SW17</text>
<text x="711.0" y="295.44" font-size="10.3" fill="#fff" textLength="20.3" lengthAdjust="spacingAndGlyphs" text-anchor="middle" xml:space="preserve" >SW4</text>
<text x="744.75" y="295.44" font-size="10.3" fill="#fff" textLength="20.3" lengthAdjust="spacingAndGlyphs" text-anchor="middle" xml:space="preserve" >SW5</text>
<text x="433.6" y="301.59" font-size="10.3" fill="#fff" textLength="20.3" lengthAdjust="spacingAndGlyphs" text-anchor="middle" xml:space="preserve" >SW8</text>
<text x="396.6" y="336.94" font-size="10.3" fill="#fff" textLength="20.3" lengthAdjust="spacingAndGlyphs" text-anchor="middle" xml:space="preserve" >SW7</text>
<text x="467.25" y="336.69" font-size="10.3" fill="#fff" textLength="20.3" lengthAdjust="spacingAndGlyphs" text-anchor="middle" xml:space="preserve" >SW9</text>
<text x="433.75" y="368.44" font-size="10.3" fill="#fff" textLength="25.2" lengthAdjust="spacingAndGlyphs" text-anchor="middle" xml:space="preserve" >SW10</text>
<text x="622.9" y="330.7" font-size="20" fill="#fff" textLength="39.2" lengthAdjust="spacingAndGlyphs" text-anchor="middle" xml:space="preserve" >SW1</text>
<text x="512.0" y="401.0" font-size="20.5" fill="#fff" textLength="19.8" lengthAdjust="spacingAndGlyphs" text-anchor="middle" xml:space="preserve" >J8</text>
<defs><filter id="sh" x="-15%" y="-40%" width="130%" height="190%"><feGaussianBlur stdDeviation="3.4"/></filter><clipPath id="dc"><rect x="314.5" y="199" width="171.1" height="63.9" rx="2.4"/></clipPath></defs>
<rect x="314" y="203" width="172" height="64.5" rx="3" fill="#000" opacity="0.36" filter="url(#sh)"/>
<g clip-path="url(#dc)">
<rect x="314.5" y="199" width="171.1" height="63.9" fill="#ffffff" />
<rect x="314.5" y="199" width="171.1" height="12" fill="#eef2f9" />
<rect x="314.5" y="245" width="171.1" height="17.9" fill="#f0f0f0" />
</g>
<rect x="314.5" y="199" width="171.1" height="63.9" rx="2.4" fill="none" stroke="#9aa0a8" stroke-width="0.4"/>
<text x="318" y="206.6" font-size="5.4" fill="#1a1a1a" textLength="27.4" lengthAdjust="spacingAndGlyphs" xml:space="preserve" >CircuitWorks</text>
<path d="M477.6,203.2 L480.6,206.2 M480.6,203.2 L477.6,206.2" stroke="#c4c8cc" stroke-width="0.6"/>
<circle cx="330" cy="228" r="6.6" fill="#1c84dc"/><circle cx="330" cy="227.2" r="5.6" fill="#2a96ea" opacity="0.6"/>
<text x="330" y="231.3" font-size="9" fill="#fff" text-anchor="middle" font-weight="bold" xml:space="preserve" >?</text>
<text x="340.6" y="227.3" font-size="5.4" fill="#1a1a1a" textLength="106" lengthAdjust="spacingAndGlyphs" xml:space="preserve" >There exist a parent child association for selected</text>
<text x="340.6" y="233.2" font-size="5.4" fill="#1a1a1a" textLength="133" lengthAdjust="spacingAndGlyphs" xml:space="preserve" >component(s). Do you want to accept associated child item(s)?</text>
<rect x="413.6" y="249.5" width="30.7" height="9.4" rx="1.2" fill="#e9f1fb" stroke="#1a6fd0" stroke-width="0.8"/>
<rect x="448.2" y="249.5" width="30.2" height="9.4" rx="1.2" fill="#fdfdfd" stroke="#cfcfcf" stroke-width="0.6"/>
<text x="429" y="255.9" font-size="5.5" fill="#1a1a1a" textLength="6.6" lengthAdjust="spacingAndGlyphs" text-anchor="middle" xml:space="preserve" >Yes</text>
<text x="463.3" y="255.9" font-size="5.5" fill="#1a1a1a" textLength="5.4" lengthAdjust="spacingAndGlyphs" text-anchor="middle" xml:space="preserve" >No</text>
</svg></body></html>
